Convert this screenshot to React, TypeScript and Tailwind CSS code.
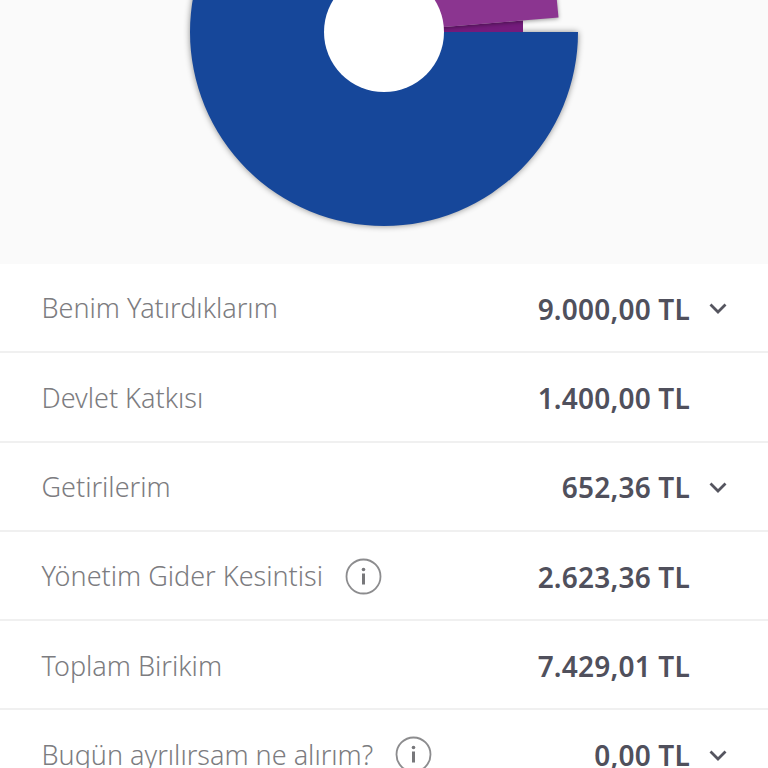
const rows = [
  { label: "Benim Yatırdıklarım", value: "9.000,00 TL", chevron: true },
  { label: "Devlet Katkısı", value: "1.400,00 TL" },
  { label: "Getirilerim", value: "652,36 TL", chevron: true },
  { label: "Yönetim Gider Kesintisi", value: "2.623,36 TL", info: true },
  { label: "Toplam Birikim", value: "7.429,01 TL" },
  { label: "Bugün ayrılırsam ne alırım?", value: "0,00 TL", chevron: true, info: true },
];

function InfoIcon() {
  return (
    <svg width="37" height="37" viewBox="0 0 37 37" fill="none" className="shrink-0">
      <circle cx="18.5" cy="18.5" r="17" stroke="#8c8c8e" strokeWidth="1.8" />
      <circle cx="18.5" cy="11.5" r="1.8" fill="#77777a" />
      <rect x="17" y="15.5" width="3" height="11" fill="#77777a" />
    </svg>
  );
}

function Chevron() {
  return (
    <svg width="18" height="11" viewBox="0 0 18 11" fill="none" className="shrink-0">
      <path d="M1.5 1.5 L9 9 L16.5 1.5" stroke="#55555f" strokeWidth="2.8" />
    </svg>
  );
}

function Chart() {
  return (
    <svg width="768" height="264" viewBox="0 0 768 264" className="block">
      {/* blue slice */}
      <path
        d="M578 32 A194 194 0 1 1 384 -162 L384 32 Z"
        fill="#16479a"
        className="drop-shadow-[0_0_3px_rgba(0,0,0,0.45)]"
      />
      <path d="M384 32 L523 20.5 L523 32 Z" fill="#741b7c" />
      <path
        d="M384 32 L558.5 17.5 L554 -30 L384 -30 Z"
        fill="#8b3590"
        className="drop-shadow-[0_1px_2px_rgba(0,0,0,0.4)]"
      />
      <circle cx="384" cy="32" r="60" fill="#ffffff" />
    </svg>
  );
}

export default function App() {
  return (
    <div className="h-[768px] overflow-hidden bg-white font-['Noto_Sans',sans-serif]">
      <div className="h-[264px] bg-[#fafafa]">
        <Chart />
      </div>
      {rows.map((r) => (
        <div key={r.label} className="flex h-[89.3px] items-center border-b-2 border-[#f0f0f0] pl-[41.5px] pr-[41px] pt-[2px]">
          <span className="text-[27px] font-light text-[#7c7c80]">{r.label}</span>
          {r.info && (
            <span className="ml-[22px] -mt-[1px]">
              <InfoIcon />
            </span>
          )}
          <span className="ml-auto text-[28px] font-semibold tracking-[0.2px] text-[#50505c]">{r.value}</span>
          <span className="flex w-[37px] justify-end">{r.chevron && <Chevron />}</span>
        </div>
      ))}
    </div>
  );
}
